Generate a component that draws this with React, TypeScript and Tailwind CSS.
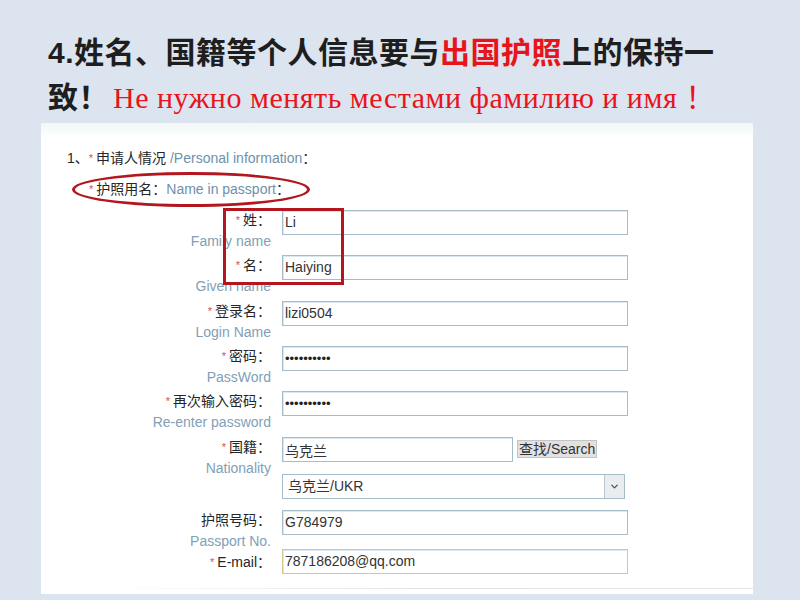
import { ChevronDown } from "lucide-react";

const cjk = "font-['Liberation_Sans','Noto_Sans_CJK_SC',sans-serif]";

type Row = {
  cn: string;
  en?: string;
  req?: boolean;
  value: string;
  h: string;
  dots?: boolean;
};

const rows: Row[] = [
  { cn: "姓：", en: "Family name", req: true, value: "Li", h: "h-[45px]" },
  { cn: "名：", en: "Given name", req: true, value: "Haiying", h: "h-[46px]" },
  { cn: "登录名：", en: "Login Name", req: true, value: "lizi0504", h: "h-[45px]" },
  { cn: "密码：", en: "PassWord", req: true, value: "••••••••••", h: "h-[45px]", dots: true },
  { cn: "再次输入密码：", en: "Re-enter password", req: true, value: "••••••••••", h: "h-[46px]", dots: true },
];

const Star = () => <span className="mr-[3px] text-[11px] align-top text-[#d0524f]">*</span>;

const Label = ({ cn, en, req }: { cn: string; en?: string; req?: boolean }) => (
  <div className="flex w-[230px] shrink-0 flex-col items-end">
    <span className="text-[14px] leading-[20px] text-[#262626]">
      {req && <Star />}
      {cn}
    </span>
    {en && <span className="mt-[1px] whitespace-nowrap text-[14px] leading-[20px] text-[#82a0b6]">{en}</span>}
  </div>
);

const Field = ({ children, w = "w-[346px]", border = "border-[#a6bdc9]" }: { children: React.ReactNode; w?: string; border?: string }) => (
  <div
    className={`flex h-[25px] ${w} items-center border ${border} bg-white pl-[2px] text-[14px] text-[#333] shadow-[inset_1px_1px_0_#dde8ee]`}
  >
    {children}
  </div>
);

export default function App() {
  return (
    <div className={`h-[600px] w-[800px] overflow-hidden bg-[#dce4ef] ${cjk}`}>
      <div className="pl-[48px] pt-[30px] text-[30px] font-bold leading-[45px] tracking-[0.5px] text-[#1e1e1e]">
        <div className="whitespace-nowrap">
          4.姓名、国籍等个人信息要与<span className="text-[#e8141c]">出国护照</span>上的保持一
        </div>
        <div className="whitespace-nowrap">
          致！
          <span className="ml-[4px] font-['Liberation_Serif','Noto_Sans_CJK_SC',serif] font-normal text-[#e8141c]">
            Не нужно менять местами фамилию и имя ！
          </span>
        </div>
      </div>

      <div className="relative ml-[41px] mt-[3px] h-[471px] w-[712px] bg-gradient-to-b from-[#f1f6f6] to-white to-[14px]">
        <div className="pl-[26px] pt-[25px]">
          <div className="text-[14px] leading-[20px] text-[#262626]">
            1、<Star />申请人情况 <span className="text-[#6e90ab]">/Personal information</span>：
          </div>
          <div className="ml-[5px] mt-[4px] flex h-[35px] w-[238px] items-center rounded-[50%] border-[3px] border-[#b3161f] pl-[14px] text-[14px] text-[#262626]">
            <Star />
            护照用名：<span className="text-[#6e90ab]">Name in passport</span>：
          </div>
        </div>

        <div className="mt-[3px] flex flex-col">
          {rows.map((r) => (
            <div key={r.cn} className={`flex ${r.h} gap-[11px]`}>
              <Label cn={r.cn} en={r.en} req={r.req} />
              <Field>
                {r.dots ? <span className="text-[13px] text-[#222]">{r.value}</span> : r.value}
              </Field>
            </div>
          ))}

          <div className="flex h-[37px] gap-[11px]">
            <Label cn="国籍：" en="Nationality" req />
            <div className="flex items-start">
              <Field w="w-[231px]">
                <span className="mt-[4px]">乌克兰</span>
              </Field>
              <div className="ml-[4px] mt-[3px] flex h-[18px] items-center border border-[#c4c4c4] bg-[#e2e2e2] px-[1px] text-[14px] leading-none text-[#333]">
                查找/Search
              </div>
            </div>
          </div>

          <div className="flex h-[36px] gap-[11px]">
            <div className="w-[230px] shrink-0" />
            <div className="flex h-[25px] w-[343px] items-center border border-[#a6bdc9] bg-white text-[14px] text-[#333]">
              <span className="flex-1 pl-[5px]">乌克兰/UKR</span>
              <div className="flex h-full w-[20px] items-center justify-center border-l border-[#b7c7d0] bg-[#e9edf0]">
                <ChevronDown size={11} strokeWidth={3} className="text-[#555]" />
              </div>
            </div>
          </div>

          <div className="flex h-[38px] gap-[11px]">
            <Label cn="护照号码：" en="Passport No." />
            <Field>G784979</Field>
          </div>

          <div className="flex h-[27px] items-center gap-[11px]">
            <Label cn="E-mail：" req />
            <Field border="border-[#d6c98e]">787186208@qq.com</Field>
          </div>
        </div>

        <div className="absolute bottom-[5px] left-[60px] right-0 h-px bg-gradient-to-r from-transparent via-[#e2e2e2] to-[#e6e6e6]" />
        <div className="absolute left-[182px] top-[85px] h-[77px] w-[121px] border-[3px] border-[#b3161f]" />
      </div>
    </div>
  );
}
